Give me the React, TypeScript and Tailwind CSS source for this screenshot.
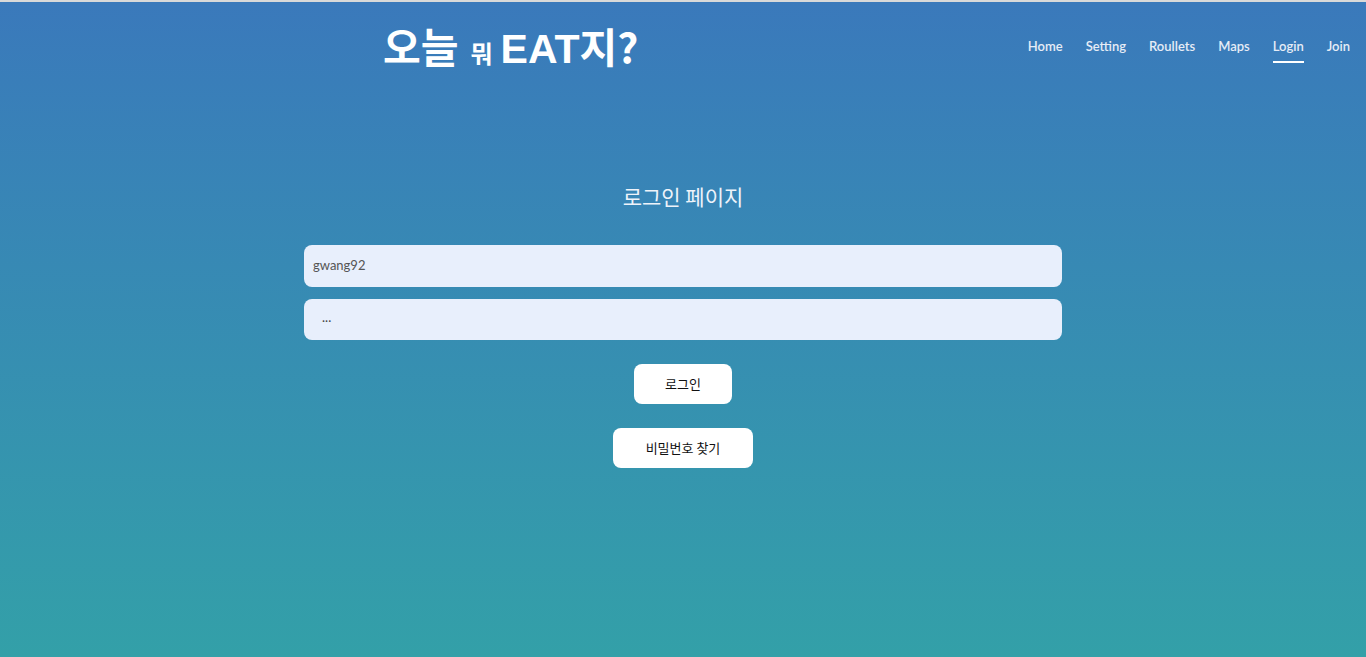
export default function App() {
  const nav = ["Home", "Setting", "Roullets", "Maps", "Login", "Join"];
  return (
    <div
      className="w-full h-[657px] border-t-2 border-[#d9d9d9] bg-gradient-to-b from-[#3a79bb] to-[#33a0a8] overflow-hidden"
      style={{ fontFamily: "Lato, 'Noto Sans CJK KR', sans-serif" }}
    >
      <header className="flex items-center justify-between h-[90px] pl-[383px] pr-[16px]">
        <h1
          className="text-white font-bold text-[41px] leading-none flex items-baseline"
          style={{ fontFamily: "'Noto Sans CJK KR', sans-serif" }}
        >
          <span>오늘</span>
          <span className="text-[24px] ml-[12px] mr-[8px]">뭐</span>
          <span style={{ fontFamily: "'Liberation Sans', 'Noto Sans CJK KR', sans-serif" }}>EAT</span>
          <span>지?</span>
        </h1>
        <nav className="flex gap-[23px] text-[13px] font-semibold text-[#e6ecf6] mt-[4px]">
          {nav.map((n) => (
            <span key={n} className="relative pb-[4px]">
              {n}
              {n === "Login" && (
                <span className="absolute left-0 right-0 bottom-[-2px] h-[2px] bg-white" />
              )}
            </span>
          ))}
        </nav>
      </header>
      <main className="flex flex-col items-center pt-[94px]">
        <h2
          className="text-[21px] text-[#eef3fa] leading-none"
          style={{ fontFamily: "'Noto Sans CJK KR', sans-serif" }}
        >
          로그인 페이지
        </h2>
        <div className="w-[758px] mt-[38px] flex flex-col gap-[12px]">
          <div className="h-[42px] rounded-[8px] bg-[#e8effc] flex items-center pl-[9px] text-[13px] text-[#555]">
            gwang92
          </div>
          <div className="h-[41px] rounded-[8px] bg-[#e8effc] flex items-center pl-[18px] text-[13px] text-[#444] pb-[4px]">
            ...
          </div>
        </div>
        <button
          className="mt-[24px] w-[98px] h-[40px] rounded-[8px] bg-white text-[13px] font-normal text-[#111]"
          style={{ fontFamily: "'Noto Sans CJK KR', sans-serif" }}
        >
          로그인
        </button>
        <button
          className="mt-[24px] w-[140px] h-[40px] rounded-[8px] bg-white text-[13px] font-normal text-[#111]"
          style={{ fontFamily: "'Noto Sans CJK KR', sans-serif" }}
        >
          비밀번호 찾기
        </button>
      </main>
    </div>
  );
}
